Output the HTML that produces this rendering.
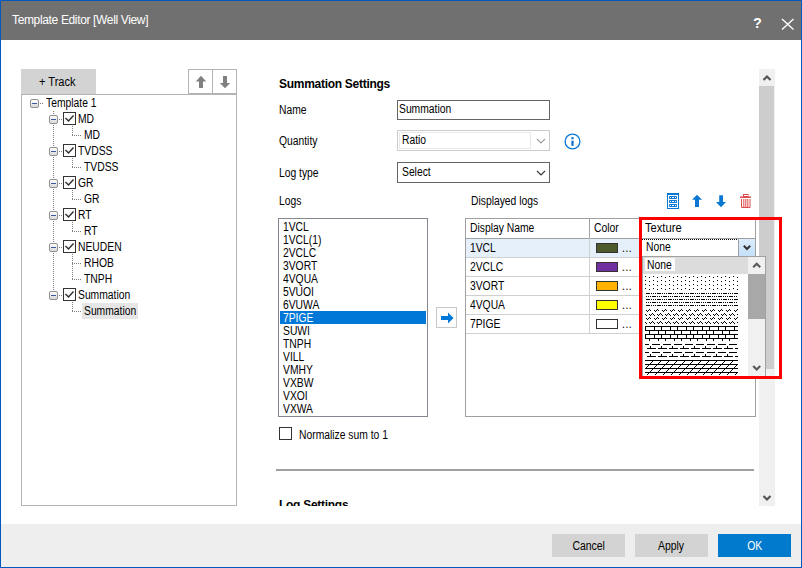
<!DOCTYPE html>
<html><head><meta charset="utf-8"><style>
*{margin:0;padding:0;box-sizing:border-box}
html,body{width:802px;height:568px;overflow:hidden;background:#fff}
body{position:relative;font-family:"Liberation Sans",sans-serif;font-size:11px;color:#000;letter-spacing:-0.35px}
.a{position:absolute}
.t{position:absolute;line-height:13px;white-space:nowrap;font-size:12px;letter-spacing:0;transform:scaleX(.86);transform-origin:0 0}
#frame{position:absolute;left:0;top:0;width:802px;height:568px;border:1px solid #0058c0}
#title{position:absolute;left:1px;top:1px;width:800px;height:39px;background:#707070}
#footer{position:absolute;left:1px;top:524px;width:800px;height:43px;background:#eeeeee}
.btn{position:absolute;top:534px;height:23px;width:73px;background:#d3d3d3;text-align:center;line-height:25px;font-size:12px;letter-spacing:0}
.btn span{display:inline-block;transform:scaleX(.87)}
.bx{position:absolute;border:1px solid #b4b4b4}
.mb{position:absolute;width:9px;height:9px;border:1px solid #919191;border-radius:2px;background:linear-gradient(#fff,#d8d8d8)}
.mb::after{content:"";position:absolute;left:1px;top:3px;width:5px;height:1px;background:#3c5aa0}
.cb{position:absolute;width:13px;height:13px;border:1px solid #333}
</style></head><body>
<div id="title"><div class="t" style="left:11px;top:12px;color:#fff;font-size:12px;line-height:14px;transform:none;letter-spacing:-0.35px">Template Editor [Well View]</div>
<svg class="a" style="left:745px;top:10px" width="50" height="24" viewBox="0 0 50 24"><text x="7" y="17.2" font-family="Liberation Sans" font-weight="bold" font-size="14.5" fill="#fff">?</text><path d="M36 8 L47.5 18.5 M47.5 8 L36 18.5" stroke="#fff" stroke-width="1.4"/></svg>
</div>
<div class="a" style="left:21px;top:69px;width:75px;height:25px;background:#d3d3d3"></div>
<div class="t" style="left:39px;top:76px;transform:scaleX(.92)">+ Track</div>
<div class="bx" style="left:188px;top:69px;width:49px;height:25px"></div>
<div class="a" style="left:212px;top:69px;width:1px;height:25px;background:#b4b4b4"></div>
<svg class="a" style="left:188px;top:69px" width="49" height="26"><path d="M7.8 12.5 L13 6.8 L18.2 12.5 H15 V19 H11 V12.5 Z" fill="#808080"/><path d="M31.8 14 H35 V7 H39 V14 H42.2 L37 19.2 Z" fill="#808080"/></svg>
<div class="bx" style="left:21px;top:94px;width:216px;height:412px"></div>
<svg class="a" style="left:0;top:0" width="240" height="330"><rect x="40" y="103" width="1" height="1" fill="#808080"/><rect x="42" y="103" width="1" height="1" fill="#808080"/><rect x="59" y="119" width="1" height="1" fill="#808080"/><rect x="61" y="119" width="1" height="1" fill="#808080"/><rect x="72" y="126" width="1" height="1" fill="#808080"/><rect x="72" y="128" width="1" height="1" fill="#808080"/><rect x="72" y="130" width="1" height="1" fill="#808080"/><rect x="72" y="132" width="1" height="1" fill="#808080"/><rect x="72" y="134" width="1" height="1" fill="#808080"/><rect x="72" y="135" width="1" height="1" fill="#808080"/><rect x="74" y="135" width="1" height="1" fill="#808080"/><rect x="76" y="135" width="1" height="1" fill="#808080"/><rect x="78" y="135" width="1" height="1" fill="#808080"/><rect x="80" y="135" width="1" height="1" fill="#808080"/><rect x="59" y="151" width="1" height="1" fill="#808080"/><rect x="61" y="151" width="1" height="1" fill="#808080"/><rect x="72" y="158" width="1" height="1" fill="#808080"/><rect x="72" y="160" width="1" height="1" fill="#808080"/><rect x="72" y="162" width="1" height="1" fill="#808080"/><rect x="72" y="164" width="1" height="1" fill="#808080"/><rect x="72" y="166" width="1" height="1" fill="#808080"/><rect x="72" y="167" width="1" height="1" fill="#808080"/><rect x="74" y="167" width="1" height="1" fill="#808080"/><rect x="76" y="167" width="1" height="1" fill="#808080"/><rect x="78" y="167" width="1" height="1" fill="#808080"/><rect x="80" y="167" width="1" height="1" fill="#808080"/><rect x="59" y="183" width="1" height="1" fill="#808080"/><rect x="61" y="183" width="1" height="1" fill="#808080"/><rect x="72" y="190" width="1" height="1" fill="#808080"/><rect x="72" y="192" width="1" height="1" fill="#808080"/><rect x="72" y="194" width="1" height="1" fill="#808080"/><rect x="72" y="196" width="1" height="1" fill="#808080"/><rect x="72" y="198" width="1" height="1" fill="#808080"/><rect x="72" y="199" width="1" height="1" fill="#808080"/><rect x="74" y="199" width="1" height="1" fill="#808080"/><rect x="76" y="199" width="1" height="1" fill="#808080"/><rect x="78" y="199" width="1" height="1" fill="#808080"/><rect x="80" y="199" width="1" height="1" fill="#808080"/><rect x="59" y="215" width="1" height="1" fill="#808080"/><rect x="61" y="215" width="1" height="1" fill="#808080"/><rect x="72" y="222" width="1" height="1" fill="#808080"/><rect x="72" y="224" width="1" height="1" fill="#808080"/><rect x="72" y="226" width="1" height="1" fill="#808080"/><rect x="72" y="228" width="1" height="1" fill="#808080"/><rect x="72" y="230" width="1" height="1" fill="#808080"/><rect x="72" y="231" width="1" height="1" fill="#808080"/><rect x="74" y="231" width="1" height="1" fill="#808080"/><rect x="76" y="231" width="1" height="1" fill="#808080"/><rect x="78" y="231" width="1" height="1" fill="#808080"/><rect x="80" y="231" width="1" height="1" fill="#808080"/><rect x="59" y="247" width="1" height="1" fill="#808080"/><rect x="61" y="247" width="1" height="1" fill="#808080"/><rect x="72" y="254" width="1" height="1" fill="#808080"/><rect x="72" y="256" width="1" height="1" fill="#808080"/><rect x="72" y="258" width="1" height="1" fill="#808080"/><rect x="72" y="260" width="1" height="1" fill="#808080"/><rect x="72" y="262" width="1" height="1" fill="#808080"/><rect x="72" y="263" width="1" height="1" fill="#808080"/><rect x="74" y="263" width="1" height="1" fill="#808080"/><rect x="76" y="263" width="1" height="1" fill="#808080"/><rect x="78" y="263" width="1" height="1" fill="#808080"/><rect x="80" y="263" width="1" height="1" fill="#808080"/><rect x="72" y="254" width="1" height="1" fill="#808080"/><rect x="72" y="256" width="1" height="1" fill="#808080"/><rect x="72" y="258" width="1" height="1" fill="#808080"/><rect x="72" y="260" width="1" height="1" fill="#808080"/><rect x="72" y="262" width="1" height="1" fill="#808080"/><rect x="72" y="264" width="1" height="1" fill="#808080"/><rect x="72" y="266" width="1" height="1" fill="#808080"/><rect x="72" y="268" width="1" height="1" fill="#808080"/><rect x="72" y="270" width="1" height="1" fill="#808080"/><rect x="72" y="272" width="1" height="1" fill="#808080"/><rect x="72" y="274" width="1" height="1" fill="#808080"/><rect x="72" y="276" width="1" height="1" fill="#808080"/><rect x="72" y="278" width="1" height="1" fill="#808080"/><rect x="72" y="279" width="1" height="1" fill="#808080"/><rect x="74" y="279" width="1" height="1" fill="#808080"/><rect x="76" y="279" width="1" height="1" fill="#808080"/><rect x="78" y="279" width="1" height="1" fill="#808080"/><rect x="80" y="279" width="1" height="1" fill="#808080"/><rect x="59" y="295" width="1" height="1" fill="#808080"/><rect x="61" y="295" width="1" height="1" fill="#808080"/><rect x="72" y="302" width="1" height="1" fill="#808080"/><rect x="72" y="304" width="1" height="1" fill="#808080"/><rect x="72" y="306" width="1" height="1" fill="#808080"/><rect x="72" y="308" width="1" height="1" fill="#808080"/><rect x="72" y="310" width="1" height="1" fill="#808080"/><rect x="72" y="311" width="1" height="1" fill="#808080"/><rect x="74" y="311" width="1" height="1" fill="#808080"/><rect x="76" y="311" width="1" height="1" fill="#808080"/><rect x="78" y="311" width="1" height="1" fill="#808080"/><rect x="80" y="311" width="1" height="1" fill="#808080"/><rect x="53" y="111" width="1" height="1" fill="#808080"/><rect x="53" y="113" width="1" height="1" fill="#808080"/><rect x="53" y="115" width="1" height="1" fill="#808080"/><rect x="53" y="117" width="1" height="1" fill="#808080"/><rect x="53" y="119" width="1" height="1" fill="#808080"/><rect x="53" y="121" width="1" height="1" fill="#808080"/><rect x="53" y="123" width="1" height="1" fill="#808080"/><rect x="53" y="125" width="1" height="1" fill="#808080"/><rect x="53" y="127" width="1" height="1" fill="#808080"/><rect x="53" y="129" width="1" height="1" fill="#808080"/><rect x="53" y="131" width="1" height="1" fill="#808080"/><rect x="53" y="133" width="1" height="1" fill="#808080"/><rect x="53" y="135" width="1" height="1" fill="#808080"/><rect x="53" y="137" width="1" height="1" fill="#808080"/><rect x="53" y="139" width="1" height="1" fill="#808080"/><rect x="53" y="141" width="1" height="1" fill="#808080"/><rect x="53" y="143" width="1" height="1" fill="#808080"/><rect x="53" y="145" width="1" height="1" fill="#808080"/><rect x="53" y="147" width="1" height="1" fill="#808080"/><rect x="53" y="149" width="1" height="1" fill="#808080"/><rect x="53" y="151" width="1" height="1" fill="#808080"/><rect x="53" y="153" width="1" height="1" fill="#808080"/><rect x="53" y="155" width="1" height="1" fill="#808080"/><rect x="53" y="157" width="1" height="1" fill="#808080"/><rect x="53" y="159" width="1" height="1" fill="#808080"/><rect x="53" y="161" width="1" height="1" fill="#808080"/><rect x="53" y="163" width="1" height="1" fill="#808080"/><rect x="53" y="165" width="1" height="1" fill="#808080"/><rect x="53" y="167" width="1" height="1" fill="#808080"/><rect x="53" y="169" width="1" height="1" fill="#808080"/><rect x="53" y="171" width="1" height="1" fill="#808080"/><rect x="53" y="173" width="1" height="1" fill="#808080"/><rect x="53" y="175" width="1" height="1" fill="#808080"/><rect x="53" y="177" width="1" height="1" fill="#808080"/><rect x="53" y="179" width="1" height="1" fill="#808080"/><rect x="53" y="181" width="1" height="1" fill="#808080"/><rect x="53" y="183" width="1" height="1" fill="#808080"/><rect x="53" y="185" width="1" height="1" fill="#808080"/><rect x="53" y="187" width="1" height="1" fill="#808080"/><rect x="53" y="189" width="1" height="1" fill="#808080"/><rect x="53" y="191" width="1" height="1" fill="#808080"/><rect x="53" y="193" width="1" height="1" fill="#808080"/><rect x="53" y="195" width="1" height="1" fill="#808080"/><rect x="53" y="197" width="1" height="1" fill="#808080"/><rect x="53" y="199" width="1" height="1" fill="#808080"/><rect x="53" y="201" width="1" height="1" fill="#808080"/><rect x="53" y="203" width="1" height="1" fill="#808080"/><rect x="53" y="205" width="1" height="1" fill="#808080"/><rect x="53" y="207" width="1" height="1" fill="#808080"/><rect x="53" y="209" width="1" height="1" fill="#808080"/><rect x="53" y="211" width="1" height="1" fill="#808080"/><rect x="53" y="213" width="1" height="1" fill="#808080"/><rect x="53" y="215" width="1" height="1" fill="#808080"/><rect x="53" y="217" width="1" height="1" fill="#808080"/><rect x="53" y="219" width="1" height="1" fill="#808080"/><rect x="53" y="221" width="1" height="1" fill="#808080"/><rect x="53" y="223" width="1" height="1" fill="#808080"/><rect x="53" y="225" width="1" height="1" fill="#808080"/><rect x="53" y="227" width="1" height="1" fill="#808080"/><rect x="53" y="229" width="1" height="1" fill="#808080"/><rect x="53" y="231" width="1" height="1" fill="#808080"/><rect x="53" y="233" width="1" height="1" fill="#808080"/><rect x="53" y="235" width="1" height="1" fill="#808080"/><rect x="53" y="237" width="1" height="1" fill="#808080"/><rect x="53" y="239" width="1" height="1" fill="#808080"/><rect x="53" y="241" width="1" height="1" fill="#808080"/><rect x="53" y="243" width="1" height="1" fill="#808080"/><rect x="53" y="245" width="1" height="1" fill="#808080"/><rect x="53" y="247" width="1" height="1" fill="#808080"/><rect x="53" y="249" width="1" height="1" fill="#808080"/><rect x="53" y="251" width="1" height="1" fill="#808080"/><rect x="53" y="253" width="1" height="1" fill="#808080"/><rect x="53" y="255" width="1" height="1" fill="#808080"/><rect x="53" y="257" width="1" height="1" fill="#808080"/><rect x="53" y="259" width="1" height="1" fill="#808080"/><rect x="53" y="261" width="1" height="1" fill="#808080"/><rect x="53" y="263" width="1" height="1" fill="#808080"/><rect x="53" y="265" width="1" height="1" fill="#808080"/><rect x="53" y="267" width="1" height="1" fill="#808080"/><rect x="53" y="269" width="1" height="1" fill="#808080"/><rect x="53" y="271" width="1" height="1" fill="#808080"/><rect x="53" y="273" width="1" height="1" fill="#808080"/><rect x="53" y="275" width="1" height="1" fill="#808080"/><rect x="53" y="277" width="1" height="1" fill="#808080"/><rect x="53" y="279" width="1" height="1" fill="#808080"/><rect x="53" y="281" width="1" height="1" fill="#808080"/><rect x="53" y="283" width="1" height="1" fill="#808080"/><rect x="53" y="285" width="1" height="1" fill="#808080"/><rect x="53" y="287" width="1" height="1" fill="#808080"/><rect x="53" y="289" width="1" height="1" fill="#808080"/></svg>
<div class="mb" style="left:30px;top:99px"></div>
<div class="t" style="left:46px;top:97px;">Template 1</div>
<div class="mb" style="left:49px;top:115px"></div>
<div class="cb" style="left:63px;top:112px"></div>
<svg class="a" style="left:63px;top:112px" width="13" height="13"><path d="M2.5 6 L5.5 9 L10.5 3.5" stroke="#333" stroke-width="1.5" fill="none"/></svg>
<div class="t" style="left:78px;top:113px;">MD</div>
<div class="t" style="left:84px;top:129px;">MD</div>
<div class="mb" style="left:49px;top:147px"></div>
<div class="cb" style="left:63px;top:144px"></div>
<svg class="a" style="left:63px;top:144px" width="13" height="13"><path d="M2.5 6 L5.5 9 L10.5 3.5" stroke="#333" stroke-width="1.5" fill="none"/></svg>
<div class="t" style="left:78px;top:145px;">TVDSS</div>
<div class="t" style="left:84px;top:161px;">TVDSS</div>
<div class="mb" style="left:49px;top:179px"></div>
<div class="cb" style="left:63px;top:176px"></div>
<svg class="a" style="left:63px;top:176px" width="13" height="13"><path d="M2.5 6 L5.5 9 L10.5 3.5" stroke="#333" stroke-width="1.5" fill="none"/></svg>
<div class="t" style="left:78px;top:177px;">GR</div>
<div class="t" style="left:84px;top:193px;">GR</div>
<div class="mb" style="left:49px;top:211px"></div>
<div class="cb" style="left:63px;top:208px"></div>
<svg class="a" style="left:63px;top:208px" width="13" height="13"><path d="M2.5 6 L5.5 9 L10.5 3.5" stroke="#333" stroke-width="1.5" fill="none"/></svg>
<div class="t" style="left:78px;top:209px;">RT</div>
<div class="t" style="left:84px;top:225px;">RT</div>
<div class="mb" style="left:49px;top:243px"></div>
<div class="cb" style="left:63px;top:240px"></div>
<svg class="a" style="left:63px;top:240px" width="13" height="13"><path d="M2.5 6 L5.5 9 L10.5 3.5" stroke="#333" stroke-width="1.5" fill="none"/></svg>
<div class="t" style="left:78px;top:241px;">NEUDEN</div>
<div class="t" style="left:84px;top:257px;">RHOB</div>
<div class="t" style="left:84px;top:273px;">TNPH</div>
<div class="mb" style="left:49px;top:291px"></div>
<div class="cb" style="left:63px;top:288px"></div>
<svg class="a" style="left:63px;top:288px" width="13" height="13"><path d="M2.5 6 L5.5 9 L10.5 3.5" stroke="#333" stroke-width="1.5" fill="none"/></svg>
<div class="t" style="left:78px;top:289px;">Summation</div>
<div class="a" style="left:82px;top:303px;width:56px;height:16px;background:#e6e6e6"></div>
<div class="t" style="left:84px;top:305px;">Summation</div>
<div class="a" style="left:759px;top:69px;width:16px;height:437px;background:#f0f0f0"></div>
<div class="a" style="left:759px;top:86px;width:15px;height:283px;background:#cdcdcd"></div>
<svg class="a" style="left:759px;top:69px" width="16" height="437"><path d="M4.5 11 L8 7.5 L11.5 11" stroke="#555" stroke-width="2.2" fill="none"/><path d="M4.5 427 L8 430.5 L11.5 427" stroke="#555" stroke-width="2.2" fill="none"/></svg>
<div class="t" style="left:279px;top:77px;font-weight:bold;font-size:12px;line-height:14px;letter-spacing:-0.28px;transform:none">Summation Settings</div>
<div class="t" style="left:279px;top:104px;">Name</div>
<div class="t" style="left:279px;top:135px;">Quantity</div>
<div class="t" style="left:279px;top:167px;">Log type</div>
<div class="t" style="left:279px;top:195px;">Logs</div>
<div class="t" style="left:471px;top:195px;">Displayed logs</div>
<div class="a" style="left:397px;top:100px;width:153px;height:20px;border:1px solid #646464"></div>
<div class="t" style="left:399px;top:103px;">Summation</div>
<div class="a" style="left:397px;top:130px;width:153px;height:21px;border:1px solid #cccccc"></div>
<div class="a" style="left:399px;top:132px;width:132px;height:17px;border:1px solid #e8e8e8"></div>
<div class="t" style="left:402px;top:134px;">Ratio</div>
<svg class="a" style="left:535px;top:137px" width="12" height="8"><path d="M2 2 L6 5.9 L10 2" stroke="#a0a0a0" stroke-width="1.1" fill="none"/></svg>
<svg class="a" style="left:563.5px;top:132.5px" width="17" height="17"><circle cx="8.5" cy="8.5" r="7.4" stroke="#0a78d2" stroke-width="1.3" fill="none"/><rect x="7.4" y="4.2" width="2.2" height="2" fill="#0a6ccc"/><rect x="7.4" y="7.6" width="2.2" height="5.2" fill="#0a6ccc"/></svg>
<div class="a" style="left:397px;top:162px;width:153px;height:21px;border:1px solid #646464"></div>
<div class="t" style="left:402px;top:166px;">Select</div>
<svg class="a" style="left:535px;top:169px" width="12" height="8"><path d="M2 2 L6 5.9 L10 2" stroke="#333" stroke-width="1.1" fill="none"/></svg>
<div class="a" style="left:278px;top:218px;width:150px;height:199px;border:1px solid #828790"></div>
<div class="t" style="left:282.5px;top:221px;">1VCL</div>
<div class="t" style="left:282.5px;top:234px;">1VCL(1)</div>
<div class="t" style="left:282.5px;top:247px;">2VCLC</div>
<div class="t" style="left:282.5px;top:260px;">3VORT</div>
<div class="t" style="left:282.5px;top:273px;">4VQUA</div>
<div class="t" style="left:282.5px;top:286px;">5VUOI</div>
<div class="t" style="left:282.5px;top:299px;">6VUWA</div>
<div class="a" style="left:280px;top:311px;width:146px;height:13px;background:#0078d7"></div>
<div class="t" style="left:282.5px;top:312px;color:#fff">7PIGE</div>
<div class="t" style="left:282.5px;top:325px;">SUWI</div>
<div class="t" style="left:282.5px;top:338px;">TNPH</div>
<div class="t" style="left:282.5px;top:351px;">VILL</div>
<div class="t" style="left:282.5px;top:364px;">VMHY</div>
<div class="t" style="left:282.5px;top:377px;">VXBW</div>
<div class="t" style="left:282.5px;top:390px;">VXOI</div>
<div class="t" style="left:282.5px;top:403px;">VXWA</div>
<div class="a" style="left:436px;top:307px;width:21px;height:21px;border:1px solid #c8c8c8;background:#fdfdfd"></div>
<svg class="a" style="left:436px;top:307px" width="21" height="21"><path d="M5 9 h7 v-3.5 l5.5 5.5 l-5.5 5.5 v-3.5 h-7 Z" fill="#0078d7"/></svg>
<div class="cb" style="left:279px;top:427px;border-color:#333"></div>
<div class="t" style="left:299px;top:429px;">Normalize sum to 1</div>
<div class="a" style="left:465px;top:218px;width:291px;height:199px;border:1px solid #a0a0a0"></div>
<div class="a" style="left:466px;top:238px;width:289px;height:1px;background:#a0a0a0"></div>
<div class="a" style="left:466px;top:239px;width:173px;height:18px;background:#e5f0fb"></div>
<div class="a" style="left:466px;top:257px;width:289px;height:1px;background:#d0d0d0"></div>
<div class="a" style="left:466px;top:276px;width:289px;height:1px;background:#d0d0d0"></div>
<div class="a" style="left:466px;top:295px;width:289px;height:1px;background:#d0d0d0"></div>
<div class="a" style="left:466px;top:314px;width:289px;height:1px;background:#d0d0d0"></div>
<div class="a" style="left:466px;top:333px;width:289px;height:1px;background:#d0d0d0"></div>
<div class="a" style="left:589px;top:219px;width:1px;height:114px;background:#d0d0d0"></div>
<div class="a" style="left:589px;top:219px;width:1px;height:19px;background:#a0a0a0"></div>
<div class="a" style="left:639px;top:219px;width:1px;height:114px;background:#d0d0d0"></div>
<div class="t" style="left:470px;top:222px;">Display Name</div>
<div class="t" style="left:594px;top:222px;">Color</div>
<div class="t" style="left:645px;top:222px;transform:scaleX(.93)">Texture</div>
<div class="t" style="left:470px;top:242px;">1VCL</div>
<div class="a" style="left:596px;top:243px;width:22px;height:10px;border:1px solid #333;background:#4f5a2a"></div>
<div class="t" style="left:622px;top:242px;letter-spacing:0.6px">...</div>
<div class="t" style="left:470px;top:261px;">2VCLC</div>
<div class="a" style="left:596px;top:262px;width:22px;height:10px;border:1px solid #333;background:#7030a0"></div>
<div class="t" style="left:622px;top:261px;letter-spacing:0.6px">...</div>
<div class="t" style="left:470px;top:280px;">3VORT</div>
<div class="a" style="left:596px;top:281px;width:22px;height:10px;border:1px solid #333;background:#ffb300"></div>
<div class="t" style="left:622px;top:280px;letter-spacing:0.6px">...</div>
<div class="t" style="left:470px;top:299px;">4VQUA</div>
<div class="a" style="left:596px;top:300px;width:22px;height:10px;border:1px solid #333;background:#ffff00"></div>
<div class="t" style="left:622px;top:299px;letter-spacing:0.6px">...</div>
<div class="t" style="left:470px;top:318px;">7PIGE</div>
<div class="a" style="left:596px;top:319px;width:22px;height:10px;border:1px solid #333;background:#ffffff"></div>
<div class="t" style="left:622px;top:318px;letter-spacing:0.6px">...</div>
<svg class="a" style="left:660px;top:188px" width="100" height="24"><rect x="7.5" y="5.5" width="11" height="15" fill="none" stroke="#0a78d2" stroke-width="1"/><rect x="7" y="5" width="12" height="2" fill="#0a78d2"/><rect x="9" y="8" width="8" height="3" rx="0.8" fill="#0a78d2"/><rect x="9" y="12" width="8" height="3" rx="0.8" fill="#0a78d2"/><rect x="9" y="16" width="8" height="3" rx="0.8" fill="#0a78d2"/><g fill="#fff"><rect x="10" y="9" width="1" height="1"/><rect x="12" y="9" width="2" height="1"/><rect x="15" y="9" width="1" height="1"/><rect x="10" y="13" width="1" height="1"/><rect x="12" y="13" width="2" height="1"/><rect x="15" y="13" width="1" height="1"/><rect x="10" y="17" width="1" height="1"/><rect x="12" y="17" width="2" height="1"/><rect x="15" y="17" width="1" height="1"/></g><path d="M32 11.8 L37 6.7 L42 11.8 H39 V19 H35 V11.8 Z" fill="#0a78d2"/><path d="M56 14 H59.2 V7.2 H63 V14 H66 L61 19.2 Z" fill="#0a78d2"/><g fill="none" stroke="#dc4a4a" stroke-width="1"><rect x="83.5" y="6.5" width="4.5" height="2"/><path d="M80 9.2 H91" stroke-width="1.5"/><path d="M81.5 11 V19.5 H90 V11 M83.8 11 V19 M85.8 11 V19 M87.8 11 V19"/></g></svg>
<div class="a" style="left:641px;top:239px;width:98px;height:18px;border:1px dotted #000;border-right:none"></div>
<div class="t" style="left:646px;top:241px;">None</div>
<div class="a" style="left:738px;top:238px;width:18px;height:19px;border:1px solid #a0a0a0;background:linear-gradient(#dcecfc,#c4e0fa)"></div>
<svg class="a" style="left:739px;top:239px" width="16" height="17"><path d="M4.8 6.8 L8 10 L11.2 6.8" stroke="#333" stroke-width="2" fill="none"/></svg>
<div class="a" style="left:642px;top:256px;width:124px;height:121px;border:1px solid #a0a0a0;background:#fff"></div>
<div class="a" style="left:643px;top:257px;width:105px;height:17px;background:#dcdcdc"></div>
<div class="a" style="left:645px;top:258px;width:30px;height:13px;background:#fbfbfb"></div>
<div class="t" style="left:647px;top:259px;">None</div>
<div class="a" style="left:748px;top:257px;width:17px;height:119px;background:#f0f0f0"></div>
<div class="a" style="left:748px;top:274px;width:17px;height:45px;background:#a8a8a8"></div>
<svg class="a" style="left:748px;top:257px" width="17" height="119"><path d="M5.2 10.3 L8.7 6.8 L12.2 10.3" stroke="#5a5a5a" stroke-width="2.2" fill="none"/><path d="M5.2 109 L8.7 112.5 L12.2 109" stroke="#5a5a5a" stroke-width="2.2" fill="none"/></svg>
<svg class="a" style="left:0;top:0" width="802" height="400"><defs><clipPath id="tc"><rect x="645" y="275" width="93" height="101"/></clipPath></defs><g clip-path="url(#tc)" fill="#000" shape-rendering="crispEdges"><rect x="645" y="276" width="1" height="1"/><rect x="649" y="277" width="1" height="1"/><rect x="653" y="276" width="1" height="1"/><rect x="657" y="277" width="1" height="1"/><rect x="661" y="276" width="1" height="1"/><rect x="665" y="277" width="1" height="1"/><rect x="669" y="276" width="1" height="1"/><rect x="673" y="277" width="1" height="1"/><rect x="677" y="276" width="1" height="1"/><rect x="681" y="277" width="1" height="1"/><rect x="685" y="276" width="1" height="1"/><rect x="689" y="277" width="1" height="1"/><rect x="693" y="276" width="1" height="1"/><rect x="697" y="277" width="1" height="1"/><rect x="701" y="276" width="1" height="1"/><rect x="705" y="277" width="1" height="1"/><rect x="709" y="276" width="1" height="1"/><rect x="713" y="277" width="1" height="1"/><rect x="717" y="276" width="1" height="1"/><rect x="721" y="277" width="1" height="1"/><rect x="725" y="276" width="1" height="1"/><rect x="729" y="277" width="1" height="1"/><rect x="733" y="276" width="1" height="1"/><rect x="737" y="277" width="1" height="1"/><rect x="645" y="280" width="1" height="1"/><rect x="649" y="281" width="1" height="1"/><rect x="653" y="280" width="1" height="1"/><rect x="657" y="281" width="1" height="1"/><rect x="661" y="280" width="1" height="1"/><rect x="665" y="281" width="1" height="1"/><rect x="669" y="280" width="1" height="1"/><rect x="673" y="281" width="1" height="1"/><rect x="677" y="280" width="1" height="1"/><rect x="681" y="281" width="1" height="1"/><rect x="685" y="280" width="1" height="1"/><rect x="689" y="281" width="1" height="1"/><rect x="693" y="280" width="1" height="1"/><rect x="697" y="281" width="1" height="1"/><rect x="701" y="280" width="1" height="1"/><rect x="705" y="281" width="1" height="1"/><rect x="709" y="280" width="1" height="1"/><rect x="713" y="281" width="1" height="1"/><rect x="717" y="280" width="1" height="1"/><rect x="721" y="281" width="1" height="1"/><rect x="725" y="280" width="1" height="1"/><rect x="729" y="281" width="1" height="1"/><rect x="733" y="280" width="1" height="1"/><rect x="737" y="281" width="1" height="1"/><rect x="645" y="284" width="1" height="1"/><rect x="649" y="285" width="1" height="1"/><rect x="653" y="284" width="1" height="1"/><rect x="657" y="285" width="1" height="1"/><rect x="661" y="284" width="1" height="1"/><rect x="665" y="285" width="1" height="1"/><rect x="669" y="284" width="1" height="1"/><rect x="673" y="285" width="1" height="1"/><rect x="677" y="284" width="1" height="1"/><rect x="681" y="285" width="1" height="1"/><rect x="685" y="284" width="1" height="1"/><rect x="689" y="285" width="1" height="1"/><rect x="693" y="284" width="1" height="1"/><rect x="697" y="285" width="1" height="1"/><rect x="701" y="284" width="1" height="1"/><rect x="705" y="285" width="1" height="1"/><rect x="709" y="284" width="1" height="1"/><rect x="713" y="285" width="1" height="1"/><rect x="717" y="284" width="1" height="1"/><rect x="721" y="285" width="1" height="1"/><rect x="725" y="284" width="1" height="1"/><rect x="729" y="285" width="1" height="1"/><rect x="733" y="284" width="1" height="1"/><rect x="737" y="285" width="1" height="1"/><rect x="645" y="288" width="1" height="1"/><rect x="649" y="289" width="1" height="1"/><rect x="653" y="288" width="1" height="1"/><rect x="657" y="289" width="1" height="1"/><rect x="661" y="288" width="1" height="1"/><rect x="665" y="289" width="1" height="1"/><rect x="669" y="288" width="1" height="1"/><rect x="673" y="289" width="1" height="1"/><rect x="677" y="288" width="1" height="1"/><rect x="681" y="289" width="1" height="1"/><rect x="685" y="288" width="1" height="1"/><rect x="689" y="289" width="1" height="1"/><rect x="693" y="288" width="1" height="1"/><rect x="697" y="289" width="1" height="1"/><rect x="701" y="288" width="1" height="1"/><rect x="705" y="289" width="1" height="1"/><rect x="709" y="288" width="1" height="1"/><rect x="713" y="289" width="1" height="1"/><rect x="717" y="288" width="1" height="1"/><rect x="721" y="289" width="1" height="1"/><rect x="725" y="288" width="1" height="1"/><rect x="729" y="289" width="1" height="1"/><rect x="733" y="288" width="1" height="1"/><rect x="737" y="289" width="1" height="1"/><rect x="635" y="293" width="4" height="1"/><rect x="640" y="293" width="1" height="1"/><rect x="642" y="293" width="1" height="1"/><rect x="644" y="293" width="1" height="1"/><rect x="646" y="293" width="4" height="1"/><rect x="651" y="293" width="1" height="1"/><rect x="653" y="293" width="1" height="1"/><rect x="655" y="293" width="1" height="1"/><rect x="657" y="293" width="4" height="1"/><rect x="662" y="293" width="1" height="1"/><rect x="664" y="293" width="1" height="1"/><rect x="666" y="293" width="1" height="1"/><rect x="668" y="293" width="4" height="1"/><rect x="673" y="293" width="1" height="1"/><rect x="675" y="293" width="1" height="1"/><rect x="677" y="293" width="1" height="1"/><rect x="679" y="293" width="4" height="1"/><rect x="684" y="293" width="1" height="1"/><rect x="686" y="293" width="1" height="1"/><rect x="688" y="293" width="1" height="1"/><rect x="690" y="293" width="4" height="1"/><rect x="695" y="293" width="1" height="1"/><rect x="697" y="293" width="1" height="1"/><rect x="699" y="293" width="1" height="1"/><rect x="701" y="293" width="4" height="1"/><rect x="706" y="293" width="1" height="1"/><rect x="708" y="293" width="1" height="1"/><rect x="710" y="293" width="1" height="1"/><rect x="712" y="293" width="4" height="1"/><rect x="717" y="293" width="1" height="1"/><rect x="719" y="293" width="1" height="1"/><rect x="721" y="293" width="1" height="1"/><rect x="723" y="293" width="4" height="1"/><rect x="728" y="293" width="1" height="1"/><rect x="730" y="293" width="1" height="1"/><rect x="732" y="293" width="1" height="1"/><rect x="734" y="293" width="4" height="1"/><rect x="739" y="293" width="1" height="1"/><rect x="741" y="293" width="1" height="1"/><rect x="743" y="293" width="1" height="1"/><rect x="745" y="293" width="4" height="1"/><rect x="750" y="293" width="1" height="1"/><rect x="752" y="293" width="1" height="1"/><rect x="754" y="293" width="1" height="1"/><rect x="641" y="296" width="4" height="1"/><rect x="646" y="296" width="1" height="1"/><rect x="648" y="296" width="1" height="1"/><rect x="650" y="296" width="1" height="1"/><rect x="652" y="296" width="4" height="1"/><rect x="657" y="296" width="1" height="1"/><rect x="659" y="296" width="1" height="1"/><rect x="661" y="296" width="1" height="1"/><rect x="663" y="296" width="4" height="1"/><rect x="668" y="296" width="1" height="1"/><rect x="670" y="296" width="1" height="1"/><rect x="672" y="296" width="1" height="1"/><rect x="674" y="296" width="4" height="1"/><rect x="679" y="296" width="1" height="1"/><rect x="681" y="296" width="1" height="1"/><rect x="683" y="296" width="1" height="1"/><rect x="685" y="296" width="4" height="1"/><rect x="690" y="296" width="1" height="1"/><rect x="692" y="296" width="1" height="1"/><rect x="694" y="296" width="1" height="1"/><rect x="696" y="296" width="4" height="1"/><rect x="701" y="296" width="1" height="1"/><rect x="703" y="296" width="1" height="1"/><rect x="705" y="296" width="1" height="1"/><rect x="707" y="296" width="4" height="1"/><rect x="712" y="296" width="1" height="1"/><rect x="714" y="296" width="1" height="1"/><rect x="716" y="296" width="1" height="1"/><rect x="718" y="296" width="4" height="1"/><rect x="723" y="296" width="1" height="1"/><rect x="725" y="296" width="1" height="1"/><rect x="727" y="296" width="1" height="1"/><rect x="729" y="296" width="4" height="1"/><rect x="734" y="296" width="1" height="1"/><rect x="736" y="296" width="1" height="1"/><rect x="738" y="296" width="1" height="1"/><rect x="740" y="296" width="4" height="1"/><rect x="745" y="296" width="1" height="1"/><rect x="747" y="296" width="1" height="1"/><rect x="749" y="296" width="1" height="1"/><rect x="751" y="296" width="4" height="1"/><rect x="756" y="296" width="1" height="1"/><rect x="758" y="296" width="1" height="1"/><rect x="760" y="296" width="1" height="1"/><rect x="635" y="299" width="4" height="1"/><rect x="640" y="299" width="1" height="1"/><rect x="642" y="299" width="1" height="1"/><rect x="644" y="299" width="1" height="1"/><rect x="646" y="299" width="4" height="1"/><rect x="651" y="299" width="1" height="1"/><rect x="653" y="299" width="1" height="1"/><rect x="655" y="299" width="1" height="1"/><rect x="657" y="299" width="4" height="1"/><rect x="662" y="299" width="1" height="1"/><rect x="664" y="299" width="1" height="1"/><rect x="666" y="299" width="1" height="1"/><rect x="668" y="299" width="4" height="1"/><rect x="673" y="299" width="1" height="1"/><rect x="675" y="299" width="1" height="1"/><rect x="677" y="299" width="1" height="1"/><rect x="679" y="299" width="4" height="1"/><rect x="684" y="299" width="1" height="1"/><rect x="686" y="299" width="1" height="1"/><rect x="688" y="299" width="1" height="1"/><rect x="690" y="299" width="4" height="1"/><rect x="695" y="299" width="1" height="1"/><rect x="697" y="299" width="1" height="1"/><rect x="699" y="299" width="1" height="1"/><rect x="701" y="299" width="4" height="1"/><rect x="706" y="299" width="1" height="1"/><rect x="708" y="299" width="1" height="1"/><rect x="710" y="299" width="1" height="1"/><rect x="712" y="299" width="4" height="1"/><rect x="717" y="299" width="1" height="1"/><rect x="719" y="299" width="1" height="1"/><rect x="721" y="299" width="1" height="1"/><rect x="723" y="299" width="4" height="1"/><rect x="728" y="299" width="1" height="1"/><rect x="730" y="299" width="1" height="1"/><rect x="732" y="299" width="1" height="1"/><rect x="734" y="299" width="4" height="1"/><rect x="739" y="299" width="1" height="1"/><rect x="741" y="299" width="1" height="1"/><rect x="743" y="299" width="1" height="1"/><rect x="745" y="299" width="4" height="1"/><rect x="750" y="299" width="1" height="1"/><rect x="752" y="299" width="1" height="1"/><rect x="754" y="299" width="1" height="1"/><rect x="641" y="302" width="4" height="1"/><rect x="646" y="302" width="1" height="1"/><rect x="648" y="302" width="1" height="1"/><rect x="650" y="302" width="1" height="1"/><rect x="652" y="302" width="4" height="1"/><rect x="657" y="302" width="1" height="1"/><rect x="659" y="302" width="1" height="1"/><rect x="661" y="302" width="1" height="1"/><rect x="663" y="302" width="4" height="1"/><rect x="668" y="302" width="1" height="1"/><rect x="670" y="302" width="1" height="1"/><rect x="672" y="302" width="1" height="1"/><rect x="674" y="302" width="4" height="1"/><rect x="679" y="302" width="1" height="1"/><rect x="681" y="302" width="1" height="1"/><rect x="683" y="302" width="1" height="1"/><rect x="685" y="302" width="4" height="1"/><rect x="690" y="302" width="1" height="1"/><rect x="692" y="302" width="1" height="1"/><rect x="694" y="302" width="1" height="1"/><rect x="696" y="302" width="4" height="1"/><rect x="701" y="302" width="1" height="1"/><rect x="703" y="302" width="1" height="1"/><rect x="705" y="302" width="1" height="1"/><rect x="707" y="302" width="4" height="1"/><rect x="712" y="302" width="1" height="1"/><rect x="714" y="302" width="1" height="1"/><rect x="716" y="302" width="1" height="1"/><rect x="718" y="302" width="4" height="1"/><rect x="723" y="302" width="1" height="1"/><rect x="725" y="302" width="1" height="1"/><rect x="727" y="302" width="1" height="1"/><rect x="729" y="302" width="4" height="1"/><rect x="734" y="302" width="1" height="1"/><rect x="736" y="302" width="1" height="1"/><rect x="738" y="302" width="1" height="1"/><rect x="740" y="302" width="4" height="1"/><rect x="745" y="302" width="1" height="1"/><rect x="747" y="302" width="1" height="1"/><rect x="749" y="302" width="1" height="1"/><rect x="751" y="302" width="4" height="1"/><rect x="756" y="302" width="1" height="1"/><rect x="758" y="302" width="1" height="1"/><rect x="760" y="302" width="1" height="1"/><rect x="635" y="305" width="4" height="1"/><rect x="640" y="305" width="1" height="1"/><rect x="642" y="305" width="1" height="1"/><rect x="644" y="305" width="1" height="1"/><rect x="646" y="305" width="4" height="1"/><rect x="651" y="305" width="1" height="1"/><rect x="653" y="305" width="1" height="1"/><rect x="655" y="305" width="1" height="1"/><rect x="657" y="305" width="4" height="1"/><rect x="662" y="305" width="1" height="1"/><rect x="664" y="305" width="1" height="1"/><rect x="666" y="305" width="1" height="1"/><rect x="668" y="305" width="4" height="1"/><rect x="673" y="305" width="1" height="1"/><rect x="675" y="305" width="1" height="1"/><rect x="677" y="305" width="1" height="1"/><rect x="679" y="305" width="4" height="1"/><rect x="684" y="305" width="1" height="1"/><rect x="686" y="305" width="1" height="1"/><rect x="688" y="305" width="1" height="1"/><rect x="690" y="305" width="4" height="1"/><rect x="695" y="305" width="1" height="1"/><rect x="697" y="305" width="1" height="1"/><rect x="699" y="305" width="1" height="1"/><rect x="701" y="305" width="4" height="1"/><rect x="706" y="305" width="1" height="1"/><rect x="708" y="305" width="1" height="1"/><rect x="710" y="305" width="1" height="1"/><rect x="712" y="305" width="4" height="1"/><rect x="717" y="305" width="1" height="1"/><rect x="719" y="305" width="1" height="1"/><rect x="721" y="305" width="1" height="1"/><rect x="723" y="305" width="4" height="1"/><rect x="728" y="305" width="1" height="1"/><rect x="730" y="305" width="1" height="1"/><rect x="732" y="305" width="1" height="1"/><rect x="734" y="305" width="4" height="1"/><rect x="739" y="305" width="1" height="1"/><rect x="741" y="305" width="1" height="1"/><rect x="743" y="305" width="1" height="1"/><rect x="745" y="305" width="4" height="1"/><rect x="750" y="305" width="1" height="1"/><rect x="752" y="305" width="1" height="1"/><rect x="754" y="305" width="1" height="1"/><rect x="638" y="310" width="1" height="1"/><rect x="639" y="311" width="1" height="1"/><rect x="640" y="310" width="1" height="1"/><rect x="641" y="309" width="1" height="1"/><rect x="642" y="310" width="1" height="1"/><rect x="646" y="310" width="1" height="1"/><rect x="647" y="311" width="1" height="1"/><rect x="648" y="310" width="1" height="1"/><rect x="649" y="309" width="1" height="1"/><rect x="650" y="310" width="1" height="1"/><rect x="654" y="310" width="1" height="1"/><rect x="655" y="311" width="1" height="1"/><rect x="656" y="310" width="1" height="1"/><rect x="657" y="309" width="1" height="1"/><rect x="658" y="310" width="1" height="1"/><rect x="662" y="310" width="1" height="1"/><rect x="663" y="311" width="1" height="1"/><rect x="664" y="310" width="1" height="1"/><rect x="665" y="309" width="1" height="1"/><rect x="666" y="310" width="1" height="1"/><rect x="670" y="310" width="1" height="1"/><rect x="671" y="311" width="1" height="1"/><rect x="672" y="310" width="1" height="1"/><rect x="673" y="309" width="1" height="1"/><rect x="674" y="310" width="1" height="1"/><rect x="678" y="310" width="1" height="1"/><rect x="679" y="311" width="1" height="1"/><rect x="680" y="310" width="1" height="1"/><rect x="681" y="309" width="1" height="1"/><rect x="682" y="310" width="1" height="1"/><rect x="686" y="310" width="1" height="1"/><rect x="687" y="311" width="1" height="1"/><rect x="688" y="310" width="1" height="1"/><rect x="689" y="309" width="1" height="1"/><rect x="690" y="310" width="1" height="1"/><rect x="694" y="310" width="1" height="1"/><rect x="695" y="311" width="1" height="1"/><rect x="696" y="310" width="1" height="1"/><rect x="697" y="309" width="1" height="1"/><rect x="698" y="310" width="1" height="1"/><rect x="702" y="310" width="1" height="1"/><rect x="703" y="311" width="1" height="1"/><rect x="704" y="310" width="1" height="1"/><rect x="705" y="309" width="1" height="1"/><rect x="706" y="310" width="1" height="1"/><rect x="710" y="310" width="1" height="1"/><rect x="711" y="311" width="1" height="1"/><rect x="712" y="310" width="1" height="1"/><rect x="713" y="309" width="1" height="1"/><rect x="714" y="310" width="1" height="1"/><rect x="718" y="310" width="1" height="1"/><rect x="719" y="311" width="1" height="1"/><rect x="720" y="310" width="1" height="1"/><rect x="721" y="309" width="1" height="1"/><rect x="722" y="310" width="1" height="1"/><rect x="726" y="310" width="1" height="1"/><rect x="727" y="311" width="1" height="1"/><rect x="728" y="310" width="1" height="1"/><rect x="729" y="309" width="1" height="1"/><rect x="730" y="310" width="1" height="1"/><rect x="734" y="310" width="1" height="1"/><rect x="735" y="311" width="1" height="1"/><rect x="736" y="310" width="1" height="1"/><rect x="737" y="309" width="1" height="1"/><rect x="738" y="310" width="1" height="1"/><rect x="742" y="310" width="1" height="1"/><rect x="743" y="311" width="1" height="1"/><rect x="744" y="310" width="1" height="1"/><rect x="745" y="309" width="1" height="1"/><rect x="746" y="310" width="1" height="1"/><rect x="641" y="314" width="1" height="1"/><rect x="642" y="315" width="1" height="1"/><rect x="643" y="314" width="1" height="1"/><rect x="644" y="313" width="1" height="1"/><rect x="645" y="314" width="1" height="1"/><rect x="646" y="315" width="1" height="1"/><rect x="649" y="314" width="1" height="1"/><rect x="650" y="315" width="1" height="1"/><rect x="651" y="314" width="1" height="1"/><rect x="652" y="313" width="1" height="1"/><rect x="653" y="314" width="1" height="1"/><rect x="654" y="315" width="1" height="1"/><rect x="657" y="314" width="1" height="1"/><rect x="658" y="315" width="1" height="1"/><rect x="659" y="314" width="1" height="1"/><rect x="660" y="313" width="1" height="1"/><rect x="661" y="314" width="1" height="1"/><rect x="662" y="315" width="1" height="1"/><rect x="665" y="314" width="1" height="1"/><rect x="666" y="315" width="1" height="1"/><rect x="667" y="314" width="1" height="1"/><rect x="668" y="313" width="1" height="1"/><rect x="669" y="314" width="1" height="1"/><rect x="670" y="315" width="1" height="1"/><rect x="673" y="314" width="1" height="1"/><rect x="674" y="315" width="1" height="1"/><rect x="675" y="314" width="1" height="1"/><rect x="676" y="313" width="1" height="1"/><rect x="677" y="314" width="1" height="1"/><rect x="678" y="315" width="1" height="1"/><rect x="681" y="314" width="1" height="1"/><rect x="682" y="315" width="1" height="1"/><rect x="683" y="314" width="1" height="1"/><rect x="684" y="313" width="1" height="1"/><rect x="685" y="314" width="1" height="1"/><rect x="686" y="315" width="1" height="1"/><rect x="689" y="314" width="1" height="1"/><rect x="690" y="315" width="1" height="1"/><rect x="691" y="314" width="1" height="1"/><rect x="692" y="313" width="1" height="1"/><rect x="693" y="314" width="1" height="1"/><rect x="694" y="315" width="1" height="1"/><rect x="697" y="314" width="1" height="1"/><rect x="698" y="315" width="1" height="1"/><rect x="699" y="314" width="1" height="1"/><rect x="700" y="313" width="1" height="1"/><rect x="701" y="314" width="1" height="1"/><rect x="702" y="315" width="1" height="1"/><rect x="705" y="314" width="1" height="1"/><rect x="706" y="315" width="1" height="1"/><rect x="707" y="314" width="1" height="1"/><rect x="708" y="313" width="1" height="1"/><rect x="709" y="314" width="1" height="1"/><rect x="710" y="315" width="1" height="1"/><rect x="713" y="314" width="1" height="1"/><rect x="714" y="315" width="1" height="1"/><rect x="715" y="314" width="1" height="1"/><rect x="716" y="313" width="1" height="1"/><rect x="717" y="314" width="1" height="1"/><rect x="718" y="315" width="1" height="1"/><rect x="721" y="314" width="1" height="1"/><rect x="722" y="315" width="1" height="1"/><rect x="723" y="314" width="1" height="1"/><rect x="724" y="313" width="1" height="1"/><rect x="725" y="314" width="1" height="1"/><rect x="726" y="315" width="1" height="1"/><rect x="729" y="314" width="1" height="1"/><rect x="730" y="315" width="1" height="1"/><rect x="731" y="314" width="1" height="1"/><rect x="732" y="313" width="1" height="1"/><rect x="733" y="314" width="1" height="1"/><rect x="734" y="315" width="1" height="1"/><rect x="737" y="314" width="1" height="1"/><rect x="738" y="315" width="1" height="1"/><rect x="739" y="314" width="1" height="1"/><rect x="740" y="313" width="1" height="1"/><rect x="741" y="314" width="1" height="1"/><rect x="742" y="315" width="1" height="1"/><rect x="745" y="314" width="1" height="1"/><rect x="746" y="315" width="1" height="1"/><rect x="747" y="314" width="1" height="1"/><rect x="748" y="313" width="1" height="1"/><rect x="749" y="314" width="1" height="1"/><rect x="750" y="315" width="1" height="1"/><rect x="638" y="318" width="1" height="1"/><rect x="639" y="319" width="1" height="1"/><rect x="640" y="318" width="1" height="1"/><rect x="641" y="317" width="1" height="1"/><rect x="642" y="318" width="1" height="1"/><rect x="646" y="318" width="1" height="1"/><rect x="647" y="319" width="1" height="1"/><rect x="648" y="318" width="1" height="1"/><rect x="649" y="317" width="1" height="1"/><rect x="650" y="318" width="1" height="1"/><rect x="654" y="318" width="1" height="1"/><rect x="655" y="319" width="1" height="1"/><rect x="656" y="318" width="1" height="1"/><rect x="657" y="317" width="1" height="1"/><rect x="658" y="318" width="1" height="1"/><rect x="662" y="318" width="1" height="1"/><rect x="663" y="319" width="1" height="1"/><rect x="664" y="318" width="1" height="1"/><rect x="665" y="317" width="1" height="1"/><rect x="666" y="318" width="1" height="1"/><rect x="670" y="318" width="1" height="1"/><rect x="671" y="319" width="1" height="1"/><rect x="672" y="318" width="1" height="1"/><rect x="673" y="317" width="1" height="1"/><rect x="674" y="318" width="1" height="1"/><rect x="678" y="318" width="1" height="1"/><rect x="679" y="319" width="1" height="1"/><rect x="680" y="318" width="1" height="1"/><rect x="681" y="317" width="1" height="1"/><rect x="682" y="318" width="1" height="1"/><rect x="686" y="318" width="1" height="1"/><rect x="687" y="319" width="1" height="1"/><rect x="688" y="318" width="1" height="1"/><rect x="689" y="317" width="1" height="1"/><rect x="690" y="318" width="1" height="1"/><rect x="694" y="318" width="1" height="1"/><rect x="695" y="319" width="1" height="1"/><rect x="696" y="318" width="1" height="1"/><rect x="697" y="317" width="1" height="1"/><rect x="698" y="318" width="1" height="1"/><rect x="702" y="318" width="1" height="1"/><rect x="703" y="319" width="1" height="1"/><rect x="704" y="318" width="1" height="1"/><rect x="705" y="317" width="1" height="1"/><rect x="706" y="318" width="1" height="1"/><rect x="710" y="318" width="1" height="1"/><rect x="711" y="319" width="1" height="1"/><rect x="712" y="318" width="1" height="1"/><rect x="713" y="317" width="1" height="1"/><rect x="714" y="318" width="1" height="1"/><rect x="718" y="318" width="1" height="1"/><rect x="719" y="319" width="1" height="1"/><rect x="720" y="318" width="1" height="1"/><rect x="721" y="317" width="1" height="1"/><rect x="722" y="318" width="1" height="1"/><rect x="726" y="318" width="1" height="1"/><rect x="727" y="319" width="1" height="1"/><rect x="728" y="318" width="1" height="1"/><rect x="729" y="317" width="1" height="1"/><rect x="730" y="318" width="1" height="1"/><rect x="734" y="318" width="1" height="1"/><rect x="735" y="319" width="1" height="1"/><rect x="736" y="318" width="1" height="1"/><rect x="737" y="317" width="1" height="1"/><rect x="738" y="318" width="1" height="1"/><rect x="742" y="318" width="1" height="1"/><rect x="743" y="319" width="1" height="1"/><rect x="744" y="318" width="1" height="1"/><rect x="745" y="317" width="1" height="1"/><rect x="746" y="318" width="1" height="1"/><rect x="641" y="322" width="1" height="1"/><rect x="642" y="323" width="1" height="1"/><rect x="643" y="322" width="1" height="1"/><rect x="644" y="321" width="1" height="1"/><rect x="645" y="322" width="1" height="1"/><rect x="646" y="323" width="1" height="1"/><rect x="649" y="322" width="1" height="1"/><rect x="650" y="323" width="1" height="1"/><rect x="651" y="322" width="1" height="1"/><rect x="652" y="321" width="1" height="1"/><rect x="653" y="322" width="1" height="1"/><rect x="654" y="323" width="1" height="1"/><rect x="657" y="322" width="1" height="1"/><rect x="658" y="323" width="1" height="1"/><rect x="659" y="322" width="1" height="1"/><rect x="660" y="321" width="1" height="1"/><rect x="661" y="322" width="1" height="1"/><rect x="662" y="323" width="1" height="1"/><rect x="665" y="322" width="1" height="1"/><rect x="666" y="323" width="1" height="1"/><rect x="667" y="322" width="1" height="1"/><rect x="668" y="321" width="1" height="1"/><rect x="669" y="322" width="1" height="1"/><rect x="670" y="323" width="1" height="1"/><rect x="673" y="322" width="1" height="1"/><rect x="674" y="323" width="1" height="1"/><rect x="675" y="322" width="1" height="1"/><rect x="676" y="321" width="1" height="1"/><rect x="677" y="322" width="1" height="1"/><rect x="678" y="323" width="1" height="1"/><rect x="681" y="322" width="1" height="1"/><rect x="682" y="323" width="1" height="1"/><rect x="683" y="322" width="1" height="1"/><rect x="684" y="321" width="1" height="1"/><rect x="685" y="322" width="1" height="1"/><rect x="686" y="323" width="1" height="1"/><rect x="689" y="322" width="1" height="1"/><rect x="690" y="323" width="1" height="1"/><rect x="691" y="322" width="1" height="1"/><rect x="692" y="321" width="1" height="1"/><rect x="693" y="322" width="1" height="1"/><rect x="694" y="323" width="1" height="1"/><rect x="697" y="322" width="1" height="1"/><rect x="698" y="323" width="1" height="1"/><rect x="699" y="322" width="1" height="1"/><rect x="700" y="321" width="1" height="1"/><rect x="701" y="322" width="1" height="1"/><rect x="702" y="323" width="1" height="1"/><rect x="705" y="322" width="1" height="1"/><rect x="706" y="323" width="1" height="1"/><rect x="707" y="322" width="1" height="1"/><rect x="708" y="321" width="1" height="1"/><rect x="709" y="322" width="1" height="1"/><rect x="710" y="323" width="1" height="1"/><rect x="713" y="322" width="1" height="1"/><rect x="714" y="323" width="1" height="1"/><rect x="715" y="322" width="1" height="1"/><rect x="716" y="321" width="1" height="1"/><rect x="717" y="322" width="1" height="1"/><rect x="718" y="323" width="1" height="1"/><rect x="721" y="322" width="1" height="1"/><rect x="722" y="323" width="1" height="1"/><rect x="723" y="322" width="1" height="1"/><rect x="724" y="321" width="1" height="1"/><rect x="725" y="322" width="1" height="1"/><rect x="726" y="323" width="1" height="1"/><rect x="729" y="322" width="1" height="1"/><rect x="730" y="323" width="1" height="1"/><rect x="731" y="322" width="1" height="1"/><rect x="732" y="321" width="1" height="1"/><rect x="733" y="322" width="1" height="1"/><rect x="734" y="323" width="1" height="1"/><rect x="737" y="322" width="1" height="1"/><rect x="738" y="323" width="1" height="1"/><rect x="739" y="322" width="1" height="1"/><rect x="740" y="321" width="1" height="1"/><rect x="741" y="322" width="1" height="1"/><rect x="742" y="323" width="1" height="1"/><rect x="745" y="322" width="1" height="1"/><rect x="746" y="323" width="1" height="1"/><rect x="747" y="322" width="1" height="1"/><rect x="748" y="321" width="1" height="1"/><rect x="749" y="322" width="1" height="1"/><rect x="750" y="323" width="1" height="1"/><rect x="645" y="326" width="93" height="1"/><rect x="645" y="330" width="93" height="1"/><rect x="645" y="334" width="93" height="1"/><rect x="645" y="338" width="93" height="1"/><rect x="629" y="327" width="1" height="3"/><rect x="638" y="327" width="1" height="3"/><rect x="645" y="327" width="1" height="3"/><rect x="654" y="327" width="1" height="3"/><rect x="661" y="327" width="1" height="3"/><rect x="670" y="327" width="1" height="3"/><rect x="677" y="327" width="1" height="3"/><rect x="686" y="327" width="1" height="3"/><rect x="693" y="327" width="1" height="3"/><rect x="702" y="327" width="1" height="3"/><rect x="709" y="327" width="1" height="3"/><rect x="718" y="327" width="1" height="3"/><rect x="725" y="327" width="1" height="3"/><rect x="734" y="327" width="1" height="3"/><rect x="741" y="327" width="1" height="3"/><rect x="750" y="327" width="1" height="3"/><rect x="633" y="331" width="1" height="3"/><rect x="642" y="331" width="1" height="3"/><rect x="649" y="331" width="1" height="3"/><rect x="658" y="331" width="1" height="3"/><rect x="665" y="331" width="1" height="3"/><rect x="674" y="331" width="1" height="3"/><rect x="681" y="331" width="1" height="3"/><rect x="690" y="331" width="1" height="3"/><rect x="697" y="331" width="1" height="3"/><rect x="706" y="331" width="1" height="3"/><rect x="713" y="331" width="1" height="3"/><rect x="722" y="331" width="1" height="3"/><rect x="729" y="331" width="1" height="3"/><rect x="738" y="331" width="1" height="3"/><rect x="745" y="331" width="1" height="3"/><rect x="754" y="331" width="1" height="3"/><rect x="629" y="335" width="1" height="3"/><rect x="638" y="335" width="1" height="3"/><rect x="645" y="335" width="1" height="3"/><rect x="654" y="335" width="1" height="3"/><rect x="661" y="335" width="1" height="3"/><rect x="670" y="335" width="1" height="3"/><rect x="677" y="335" width="1" height="3"/><rect x="686" y="335" width="1" height="3"/><rect x="693" y="335" width="1" height="3"/><rect x="702" y="335" width="1" height="3"/><rect x="709" y="335" width="1" height="3"/><rect x="718" y="335" width="1" height="3"/><rect x="725" y="335" width="1" height="3"/><rect x="734" y="335" width="1" height="3"/><rect x="741" y="335" width="1" height="3"/><rect x="750" y="335" width="1" height="3"/><rect x="633" y="339" width="1" height="2"/><rect x="642" y="339" width="1" height="2"/><rect x="649" y="339" width="1" height="2"/><rect x="658" y="339" width="1" height="2"/><rect x="665" y="339" width="1" height="2"/><rect x="674" y="339" width="1" height="2"/><rect x="681" y="339" width="1" height="2"/><rect x="690" y="339" width="1" height="2"/><rect x="697" y="339" width="1" height="2"/><rect x="706" y="339" width="1" height="2"/><rect x="713" y="339" width="1" height="2"/><rect x="722" y="339" width="1" height="2"/><rect x="729" y="339" width="1" height="2"/><rect x="738" y="339" width="1" height="2"/><rect x="745" y="339" width="1" height="2"/><rect x="754" y="339" width="1" height="2"/><rect x="630" y="344" width="8" height="1"/><rect x="636" y="348" width="9" height="1"/><rect x="639" y="346" width="1" height="2"/><rect x="641" y="344" width="8" height="1"/><rect x="647" y="348" width="9" height="1"/><rect x="650" y="346" width="1" height="2"/><rect x="652" y="344" width="8" height="1"/><rect x="658" y="348" width="9" height="1"/><rect x="661" y="346" width="1" height="2"/><rect x="663" y="344" width="8" height="1"/><rect x="669" y="348" width="9" height="1"/><rect x="672" y="346" width="1" height="2"/><rect x="674" y="344" width="8" height="1"/><rect x="680" y="348" width="9" height="1"/><rect x="683" y="346" width="1" height="2"/><rect x="685" y="344" width="8" height="1"/><rect x="691" y="348" width="9" height="1"/><rect x="694" y="346" width="1" height="2"/><rect x="696" y="344" width="8" height="1"/><rect x="702" y="348" width="9" height="1"/><rect x="705" y="346" width="1" height="2"/><rect x="707" y="344" width="8" height="1"/><rect x="713" y="348" width="9" height="1"/><rect x="716" y="346" width="1" height="2"/><rect x="718" y="344" width="8" height="1"/><rect x="724" y="348" width="9" height="1"/><rect x="727" y="346" width="1" height="2"/><rect x="729" y="344" width="8" height="1"/><rect x="735" y="348" width="9" height="1"/><rect x="738" y="346" width="1" height="2"/><rect x="740" y="344" width="8" height="1"/><rect x="746" y="348" width="9" height="1"/><rect x="749" y="346" width="1" height="2"/><rect x="630" y="352" width="8" height="1"/><rect x="636" y="356" width="9" height="1"/><rect x="639" y="354" width="1" height="2"/><rect x="641" y="352" width="8" height="1"/><rect x="647" y="356" width="9" height="1"/><rect x="650" y="354" width="1" height="2"/><rect x="652" y="352" width="8" height="1"/><rect x="658" y="356" width="9" height="1"/><rect x="661" y="354" width="1" height="2"/><rect x="663" y="352" width="8" height="1"/><rect x="669" y="356" width="9" height="1"/><rect x="672" y="354" width="1" height="2"/><rect x="674" y="352" width="8" height="1"/><rect x="680" y="356" width="9" height="1"/><rect x="683" y="354" width="1" height="2"/><rect x="685" y="352" width="8" height="1"/><rect x="691" y="356" width="9" height="1"/><rect x="694" y="354" width="1" height="2"/><rect x="696" y="352" width="8" height="1"/><rect x="702" y="356" width="9" height="1"/><rect x="705" y="354" width="1" height="2"/><rect x="707" y="352" width="8" height="1"/><rect x="713" y="356" width="9" height="1"/><rect x="716" y="354" width="1" height="2"/><rect x="718" y="352" width="8" height="1"/><rect x="724" y="356" width="9" height="1"/><rect x="727" y="354" width="1" height="2"/><rect x="729" y="352" width="8" height="1"/><rect x="735" y="356" width="9" height="1"/><rect x="738" y="354" width="1" height="2"/><rect x="740" y="352" width="8" height="1"/><rect x="746" y="356" width="9" height="1"/><rect x="749" y="354" width="1" height="2"/><rect x="645" y="360" width="93" height="1"/><rect x="645" y="364" width="93" height="1"/><rect x="645" y="368" width="93" height="1"/><rect x="645" y="372" width="93" height="1"/><rect x="642" y="363" width="1" height="1"/><rect x="643" y="362" width="1" height="1"/><rect x="644" y="361" width="1" height="1"/><rect x="650" y="363" width="1" height="1"/><rect x="651" y="362" width="1" height="1"/><rect x="652" y="361" width="1" height="1"/><rect x="658" y="363" width="1" height="1"/><rect x="659" y="362" width="1" height="1"/><rect x="660" y="361" width="1" height="1"/><rect x="666" y="363" width="1" height="1"/><rect x="667" y="362" width="1" height="1"/><rect x="668" y="361" width="1" height="1"/><rect x="674" y="363" width="1" height="1"/><rect x="675" y="362" width="1" height="1"/><rect x="676" y="361" width="1" height="1"/><rect x="682" y="363" width="1" height="1"/><rect x="683" y="362" width="1" height="1"/><rect x="684" y="361" width="1" height="1"/><rect x="690" y="363" width="1" height="1"/><rect x="691" y="362" width="1" height="1"/><rect x="692" y="361" width="1" height="1"/><rect x="698" y="363" width="1" height="1"/><rect x="699" y="362" width="1" height="1"/><rect x="700" y="361" width="1" height="1"/><rect x="706" y="363" width="1" height="1"/><rect x="707" y="362" width="1" height="1"/><rect x="708" y="361" width="1" height="1"/><rect x="714" y="363" width="1" height="1"/><rect x="715" y="362" width="1" height="1"/><rect x="716" y="361" width="1" height="1"/><rect x="722" y="363" width="1" height="1"/><rect x="723" y="362" width="1" height="1"/><rect x="724" y="361" width="1" height="1"/><rect x="730" y="363" width="1" height="1"/><rect x="731" y="362" width="1" height="1"/><rect x="732" y="361" width="1" height="1"/><rect x="738" y="363" width="1" height="1"/><rect x="739" y="362" width="1" height="1"/><rect x="740" y="361" width="1" height="1"/><rect x="746" y="363" width="1" height="1"/><rect x="747" y="362" width="1" height="1"/><rect x="748" y="361" width="1" height="1"/><rect x="754" y="363" width="1" height="1"/><rect x="755" y="362" width="1" height="1"/><rect x="756" y="361" width="1" height="1"/><rect x="638" y="367" width="1" height="1"/><rect x="639" y="366" width="1" height="1"/><rect x="640" y="365" width="1" height="1"/><rect x="646" y="367" width="1" height="1"/><rect x="647" y="366" width="1" height="1"/><rect x="648" y="365" width="1" height="1"/><rect x="654" y="367" width="1" height="1"/><rect x="655" y="366" width="1" height="1"/><rect x="656" y="365" width="1" height="1"/><rect x="662" y="367" width="1" height="1"/><rect x="663" y="366" width="1" height="1"/><rect x="664" y="365" width="1" height="1"/><rect x="670" y="367" width="1" height="1"/><rect x="671" y="366" width="1" height="1"/><rect x="672" y="365" width="1" height="1"/><rect x="678" y="367" width="1" height="1"/><rect x="679" y="366" width="1" height="1"/><rect x="680" y="365" width="1" height="1"/><rect x="686" y="367" width="1" height="1"/><rect x="687" y="366" width="1" height="1"/><rect x="688" y="365" width="1" height="1"/><rect x="694" y="367" width="1" height="1"/><rect x="695" y="366" width="1" height="1"/><rect x="696" y="365" width="1" height="1"/><rect x="702" y="367" width="1" height="1"/><rect x="703" y="366" width="1" height="1"/><rect x="704" y="365" width="1" height="1"/><rect x="710" y="367" width="1" height="1"/><rect x="711" y="366" width="1" height="1"/><rect x="712" y="365" width="1" height="1"/><rect x="718" y="367" width="1" height="1"/><rect x="719" y="366" width="1" height="1"/><rect x="720" y="365" width="1" height="1"/><rect x="726" y="367" width="1" height="1"/><rect x="727" y="366" width="1" height="1"/><rect x="728" y="365" width="1" height="1"/><rect x="734" y="367" width="1" height="1"/><rect x="735" y="366" width="1" height="1"/><rect x="736" y="365" width="1" height="1"/><rect x="742" y="367" width="1" height="1"/><rect x="743" y="366" width="1" height="1"/><rect x="744" y="365" width="1" height="1"/><rect x="750" y="367" width="1" height="1"/><rect x="751" y="366" width="1" height="1"/><rect x="752" y="365" width="1" height="1"/><rect x="642" y="371" width="1" height="1"/><rect x="643" y="370" width="1" height="1"/><rect x="644" y="369" width="1" height="1"/><rect x="650" y="371" width="1" height="1"/><rect x="651" y="370" width="1" height="1"/><rect x="652" y="369" width="1" height="1"/><rect x="658" y="371" width="1" height="1"/><rect x="659" y="370" width="1" height="1"/><rect x="660" y="369" width="1" height="1"/><rect x="666" y="371" width="1" height="1"/><rect x="667" y="370" width="1" height="1"/><rect x="668" y="369" width="1" height="1"/><rect x="674" y="371" width="1" height="1"/><rect x="675" y="370" width="1" height="1"/><rect x="676" y="369" width="1" height="1"/><rect x="682" y="371" width="1" height="1"/><rect x="683" y="370" width="1" height="1"/><rect x="684" y="369" width="1" height="1"/><rect x="690" y="371" width="1" height="1"/><rect x="691" y="370" width="1" height="1"/><rect x="692" y="369" width="1" height="1"/><rect x="698" y="371" width="1" height="1"/><rect x="699" y="370" width="1" height="1"/><rect x="700" y="369" width="1" height="1"/><rect x="706" y="371" width="1" height="1"/><rect x="707" y="370" width="1" height="1"/><rect x="708" y="369" width="1" height="1"/><rect x="714" y="371" width="1" height="1"/><rect x="715" y="370" width="1" height="1"/><rect x="716" y="369" width="1" height="1"/><rect x="722" y="371" width="1" height="1"/><rect x="723" y="370" width="1" height="1"/><rect x="724" y="369" width="1" height="1"/><rect x="730" y="371" width="1" height="1"/><rect x="731" y="370" width="1" height="1"/><rect x="732" y="369" width="1" height="1"/><rect x="738" y="371" width="1" height="1"/><rect x="739" y="370" width="1" height="1"/><rect x="740" y="369" width="1" height="1"/><rect x="746" y="371" width="1" height="1"/><rect x="747" y="370" width="1" height="1"/><rect x="748" y="369" width="1" height="1"/><rect x="754" y="371" width="1" height="1"/><rect x="755" y="370" width="1" height="1"/><rect x="756" y="369" width="1" height="1"/><rect x="639" y="374" width="1" height="1"/><rect x="640" y="373" width="1" height="1"/><rect x="647" y="374" width="1" height="1"/><rect x="648" y="373" width="1" height="1"/><rect x="655" y="374" width="1" height="1"/><rect x="656" y="373" width="1" height="1"/><rect x="663" y="374" width="1" height="1"/><rect x="664" y="373" width="1" height="1"/><rect x="671" y="374" width="1" height="1"/><rect x="672" y="373" width="1" height="1"/><rect x="679" y="374" width="1" height="1"/><rect x="680" y="373" width="1" height="1"/><rect x="687" y="374" width="1" height="1"/><rect x="688" y="373" width="1" height="1"/><rect x="695" y="374" width="1" height="1"/><rect x="696" y="373" width="1" height="1"/><rect x="703" y="374" width="1" height="1"/><rect x="704" y="373" width="1" height="1"/><rect x="711" y="374" width="1" height="1"/><rect x="712" y="373" width="1" height="1"/><rect x="719" y="374" width="1" height="1"/><rect x="720" y="373" width="1" height="1"/><rect x="727" y="374" width="1" height="1"/><rect x="728" y="373" width="1" height="1"/><rect x="735" y="374" width="1" height="1"/><rect x="736" y="373" width="1" height="1"/><rect x="743" y="374" width="1" height="1"/><rect x="744" y="373" width="1" height="1"/></g></svg>
<div class="a" style="left:276px;top:469px;width:478px;height:2px;background:#a0a0a0"></div>
<div class="t" style="left:279px;top:498px;font-weight:bold;font-size:12px;line-height:14px;letter-spacing:-0.28px;transform:none;height:8px;overflow:hidden">Log Settings</div>
<div class="a" style="left:639px;top:217px;width:143px;height:162px;border:3px solid #ff0000"></div>
<div id="footer"></div>
<div class="btn" style="left:552px"><span>Cancel</span></div>
<div class="btn" style="left:635px"><span>Apply</span></div>
<div class="btn" style="left:718px;background:#007acc;color:#fff"><span>OK</span></div>
<div id="frame"></div>
</body></html>
